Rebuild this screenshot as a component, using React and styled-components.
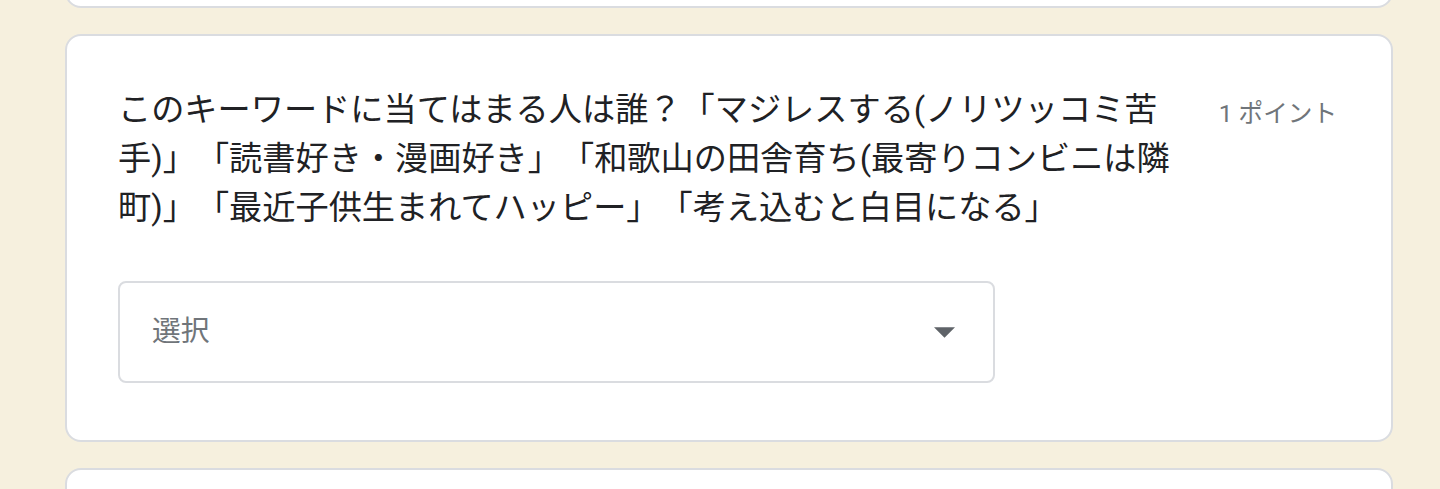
import styled, { createGlobalStyle } from "styled-components";

const GlobalStyle = createGlobalStyle`
	html, body {
		margin: 0;
		padding: 0;
		background: #f6f0de;
		overflow: hidden;
	}
	body {
		font-family: Roboto, "Noto Sans CJK JP", sans-serif;
		color: #202124;
	}
`;

const Page = styled.div`
	display: flex;
	flex-direction: column;
	gap: 26px;
	margin-top: -93px;
	padding-left: 65px;
	width: 1328px;
`;

const Card = styled.div`
	box-sizing: border-box;
	background: #ffffff;
	border: 2px solid #dadce0;
	border-radius: 16px;
	height: ${(p) => (p.$height ? `${p.$height}px` : "auto")};
	padding: ${(p) => (p.$plain ? "0" : "49px 54px 57px 51px")};
`;

const Header = styled.div`
	display: flex;
	align-items: flex-start;
	gap: 44px;
`;

const Title = styled.div`
	flex: 1;
	font-size: 33.2px;
	line-height: 49px;
	color: #202124;
	text-spacing-trim: space-all;
`;

const Points = styled.div`
	flex-shrink: 0;
	font-size: 24.6px;
	line-height: 49px;
	margin-top: 4px;
	color: #70757a;
	white-space: nowrap;
`;

const Select = styled.div`
	box-sizing: border-box;
	margin-top: 49px;
	width: 877px;
	height: 102px;
	border: 2px solid #dadce0;
	border-radius: 8px;
	display: flex;
	align-items: center;
	justify-content: space-between;
	padding: 0 38px 0 32px;
`;

const Placeholder = styled.span`
	font-size: 28.7px;
	color: #70757a;
	margin-top: -7px;
`;

const Arrow = styled.svg`
	width: 21px;
	height: 11px;
	fill: #5f6368;
`;

function App() {
	return (
		<>
			<GlobalStyle />
			<Page>
				<Card $plain $height={101} />
				<Card>
					<Header>
						<Title>
							このキーワードに当てはまる人は誰？「マジレスする(ノリツッコミ苦手)」「読書好き・漫画好き」「和歌山の田舎育ち(最寄りコンビニは隣町)」「最近子供生まれてハッピー」「考え込むと白目になる」
						</Title>
						<Points>1 ポイント</Points>
					</Header>
					<Select>
						<Placeholder>選択</Placeholder>
						<Arrow viewBox="0 0 10 5">
							<path d="M0 0L5 5L10 0Z" />
						</Arrow>
					</Select>
				</Card>
				<Card $plain $height={120} />
			</Page>
		</>
	);
}

export default App;
